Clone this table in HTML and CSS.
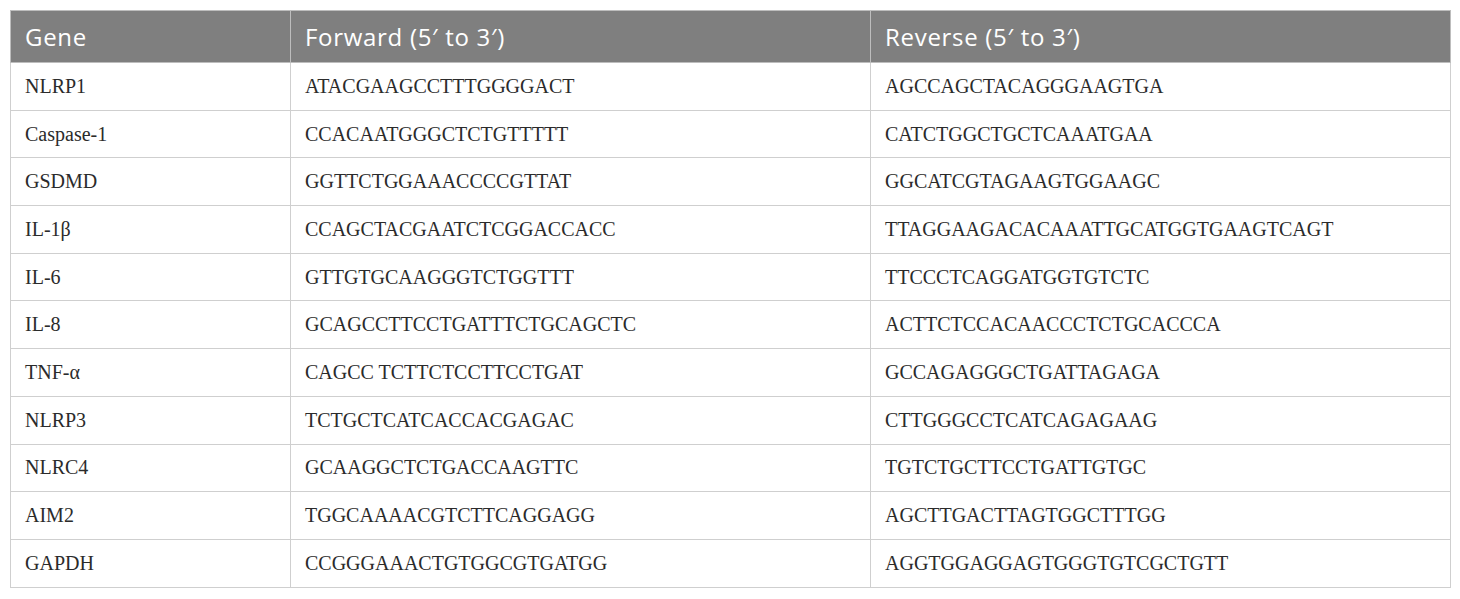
FILE: index.html
```html
<!DOCTYPE html>
<html>
<head>
<meta charset="utf-8">
<link rel="stylesheet" href="styles.css">
</head>
<body>
<table class="primers">
  <colgroup>
    <col class="c-gene">
    <col class="c-seq">
    <col class="c-seq">
  </colgroup>
  <thead>
    <tr><th>Gene</th><th>Forward (5′ to 3′)</th><th>Reverse (5′ to 3′)</th></tr>
  </thead>
  <tbody>
    <tr><td>NLRP1</td><td>ATACGAAGCCTTTGGGGACT</td><td>AGCCAGCTACAGGGAAGTGA</td></tr>
    <tr><td>Caspase-1</td><td>CCACAATGGGCTCTGTTTTT</td><td>CATCTGGCTGCTCAAATGAA</td></tr>
    <tr><td>GSDMD</td><td>GGTTCTGGAAACCCCGTTAT</td><td>GGCATCGTAGAAGTGGAAGC</td></tr>
    <tr><td>IL-1β</td><td>CCAGCTACGAATCTCGGACCACC</td><td>TTAGGAAGACACAAATTGCATGGTGAAGTCAGT</td></tr>
    <tr><td>IL-6</td><td>GTTGTGCAAGGGTCTGGTTT</td><td>TTCCCTCAGGATGGTGTCTC</td></tr>
    <tr><td>IL-8</td><td>GCAGCCTTCCTGATTTCTGCAGCTC</td><td>ACTTCTCCACAACCCTCTGCACCCA</td></tr>
    <tr><td>TNF-α</td><td>CAGCC TCTTCTCCTTCCTGAT</td><td>GCCAGAGGGCTGATTAGAGA</td></tr>
    <tr><td>NLRP3</td><td>TCTGCTCATCACCACGAGAC</td><td>CTTGGGCCTCATCAGAGAAG</td></tr>
    <tr><td>NLRC4</td><td>GCAAGGCTCTGACCAAGTTC</td><td>TGTCTGCTTCCTGATTGTGC</td></tr>
    <tr><td>AIM2</td><td>TGGCAAAACGTCTTCAGGAGG</td><td>AGCTTGACTTAGTGGCTTTGG</td></tr>
    <tr><td>GAPDH</td><td>CCGGGAAACTGTGGCGTGATGG</td><td>AGGTGGAGGAGTGGGTGTCGCTGTT</td></tr>
  </tbody>
</table>
</body>
</html>
```

FILE: styles.css
```css
html, body {
  margin: 0;
  background: #ffffff;
}
body {
  padding: 10px;
}
.primers {
  border-collapse: collapse;
  width: 1440px;
  table-layout: fixed;
}
.c-gene { width: 280px; }
.c-seq { width: 580px; }
.primers th {
  background: #7f7f7f;
  color: #ffffff;
  font-family: "Open Sans", "Noto Sans", sans-serif;
  font-weight: 400;
  font-size: 24px;
  letter-spacing: 0.7px;
  text-align: left;
  height: 52px;
  padding: 0 14px;
  border: 1px solid #bdbdbd;
  box-sizing: border-box;
  vertical-align: middle;
}
.primers td {
  font-family: "Liberation Serif", "Times New Roman", serif;
  font-size: 20px;
  color: #2b2b2b;
  height: 47.7px;
  padding: 0 14px;
  border: 1px solid #cfcfcf;
  box-sizing: border-box;
  vertical-align: middle;
  white-space: nowrap;
}
```
